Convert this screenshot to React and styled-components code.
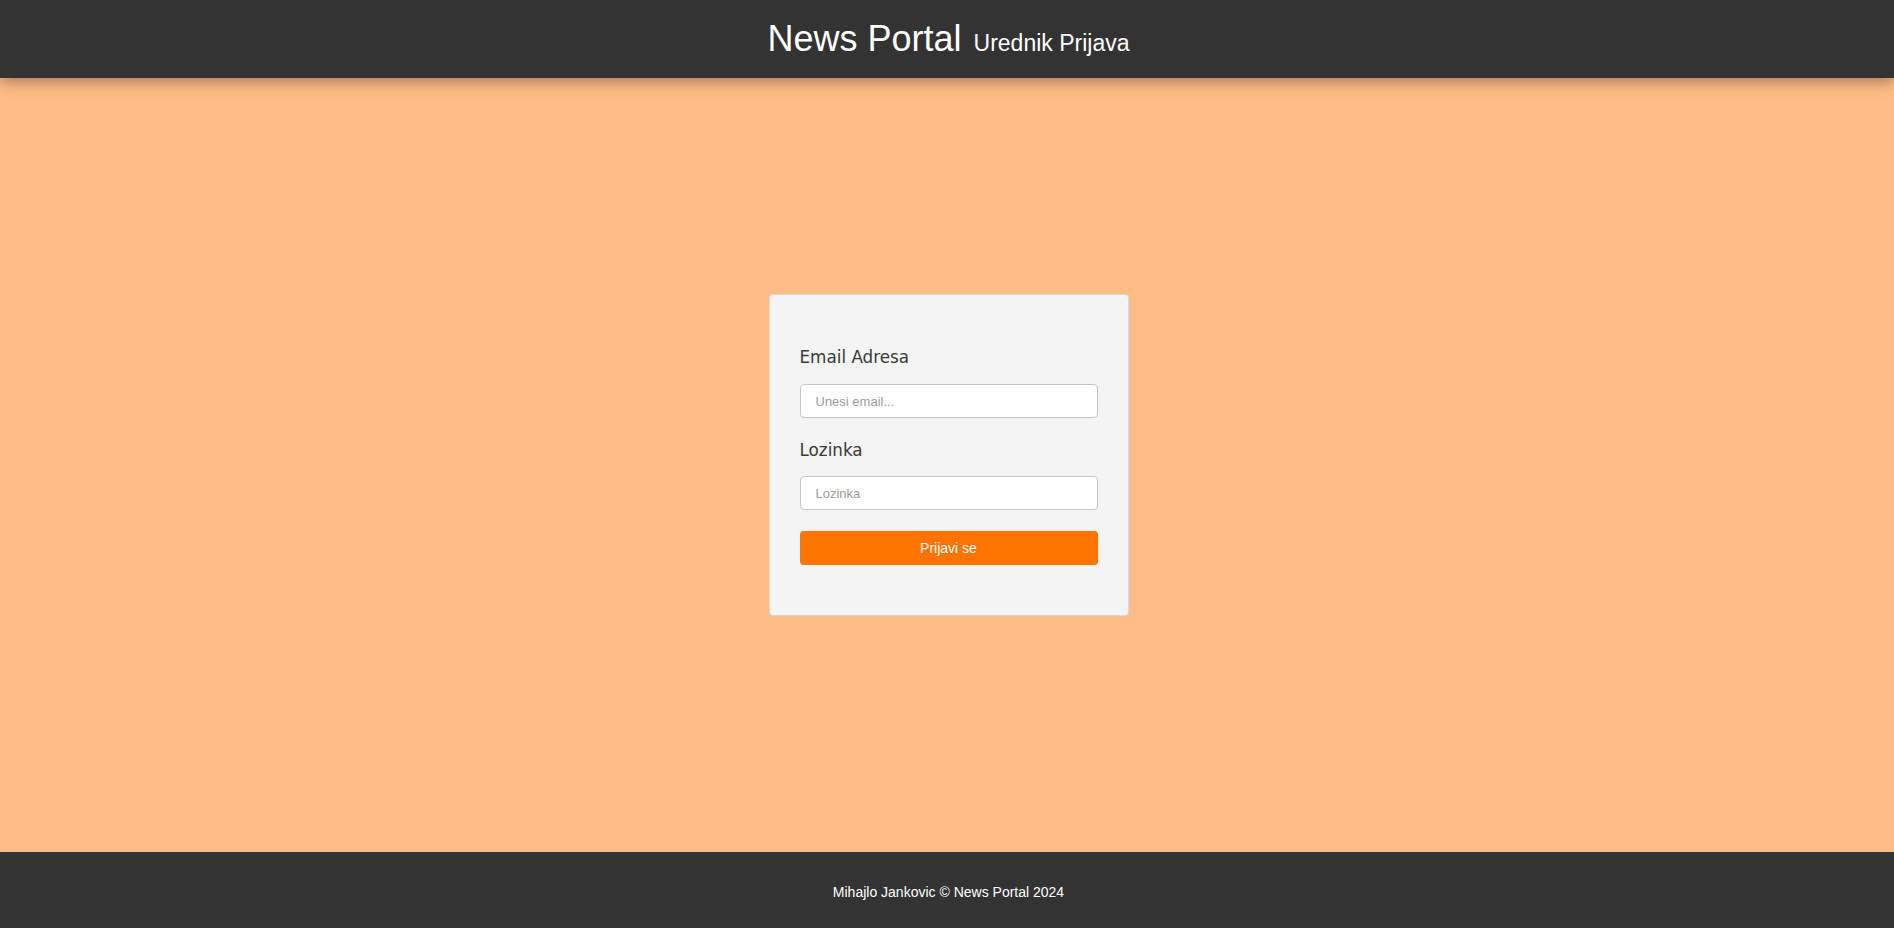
import React from 'react';
import styled, { createGlobalStyle } from 'styled-components';

const GlobalStyle = createGlobalStyle`
  html, body {
    margin: 0;
    padding: 0;
    height: 100%;
  }
  body {
    font-family: "Liberation Sans", Arial, sans-serif;
    background: #ffbd86;
  }
  #root {
    min-height: 100vh;
  }
`;

const Page = styled.div`
  min-height: 100vh;
  display: flex;
  flex-direction: column;
`;

const Header = styled.header`
  height: 78px;
  padding-left: 3px;
  background: #333333;
  color: #fff;
  display: flex;
  align-items: center;
  justify-content: center;
  box-shadow: 0 4px 14px rgba(0, 0, 0, 0.35);
  position: relative;
  z-index: 2;
`;

const Title = styled.h1`
  margin: 0;
  font-size: 36px;
  font-weight: 400;
  padding-bottom: 1px;
`;

const SubTitle = styled.small`
  font-size: 23px;
  margin-left: 2px;
`;

const Main = styled.main`
  flex: 1;
  display: flex;
  align-items: center;
  justify-content: center;
  padding: 0 0 20px 3px;
`;

const Card = styled.form`
  width: 298px;
  padding: 52px 30px 50px;
  background: #f4f4f4;
  border: 1px solid #d9d9d9;
  border-radius: 4px;
  display: flex;
  flex-direction: column;
`;

const Label = styled.label`
  font-family: "DejaVu Sans", Verdana, sans-serif;
  font-size: 16.8px;
  color: #3a3a3a;
  margin-bottom: ${(p) => p.$gap}px;
`;

const Input = styled.input`
  box-sizing: border-box;
  height: 34px;
  width: 100%;
  padding: 0 15px;
  border: 1px solid #c8c8c8;
  border-radius: 4px;
  background: #fff;
  font-family: "Liberation Sans", Arial, sans-serif;
  font-size: 13px;
  color: #333;
  margin-bottom: ${(p) => p.$gap}px;
  outline: none;

  &::placeholder {
    color: #9c9c9c;
  }
`;

const Button = styled.button`
  height: 34px;
  width: 100%;
  border: none;
  border-radius: 4px;
  background: #ff7300;
  color: #fff;
  font-family: "Liberation Sans", Arial, sans-serif;
  font-size: 14px;
  cursor: pointer;
`;

const Footer = styled.footer`
  height: 76px;
  background: #333333;
  color: #fff;
  display: flex;
  align-items: center;
  justify-content: center;
  font-size: 14px;
  padding: 4px 0 0 3px;
  box-sizing: border-box;
`;

export default function App() {
  return (
    <Page>
      <GlobalStyle />
      <Header>
        <Title>
          News Portal <SubTitle>Urednik Prijava</SubTitle>
        </Title>
      </Header>
      <Main>
        <Card onSubmit={(e) => e.preventDefault()}>
          <Label htmlFor="email" $gap={17}>Email Adresa</Label>
          <Input id="email" type="email" placeholder="Unesi email..." $gap={22} />
          <Label htmlFor="lozinka" $gap={16}>Lozinka</Label>
          <Input id="lozinka" type="password" placeholder="Lozinka" $gap={21} />
          <Button type="submit">Prijavi se</Button>
        </Card>
      </Main>
      <Footer>Mihajlo Jankovic © News Portal 2024</Footer>
    </Page>
  );
}
